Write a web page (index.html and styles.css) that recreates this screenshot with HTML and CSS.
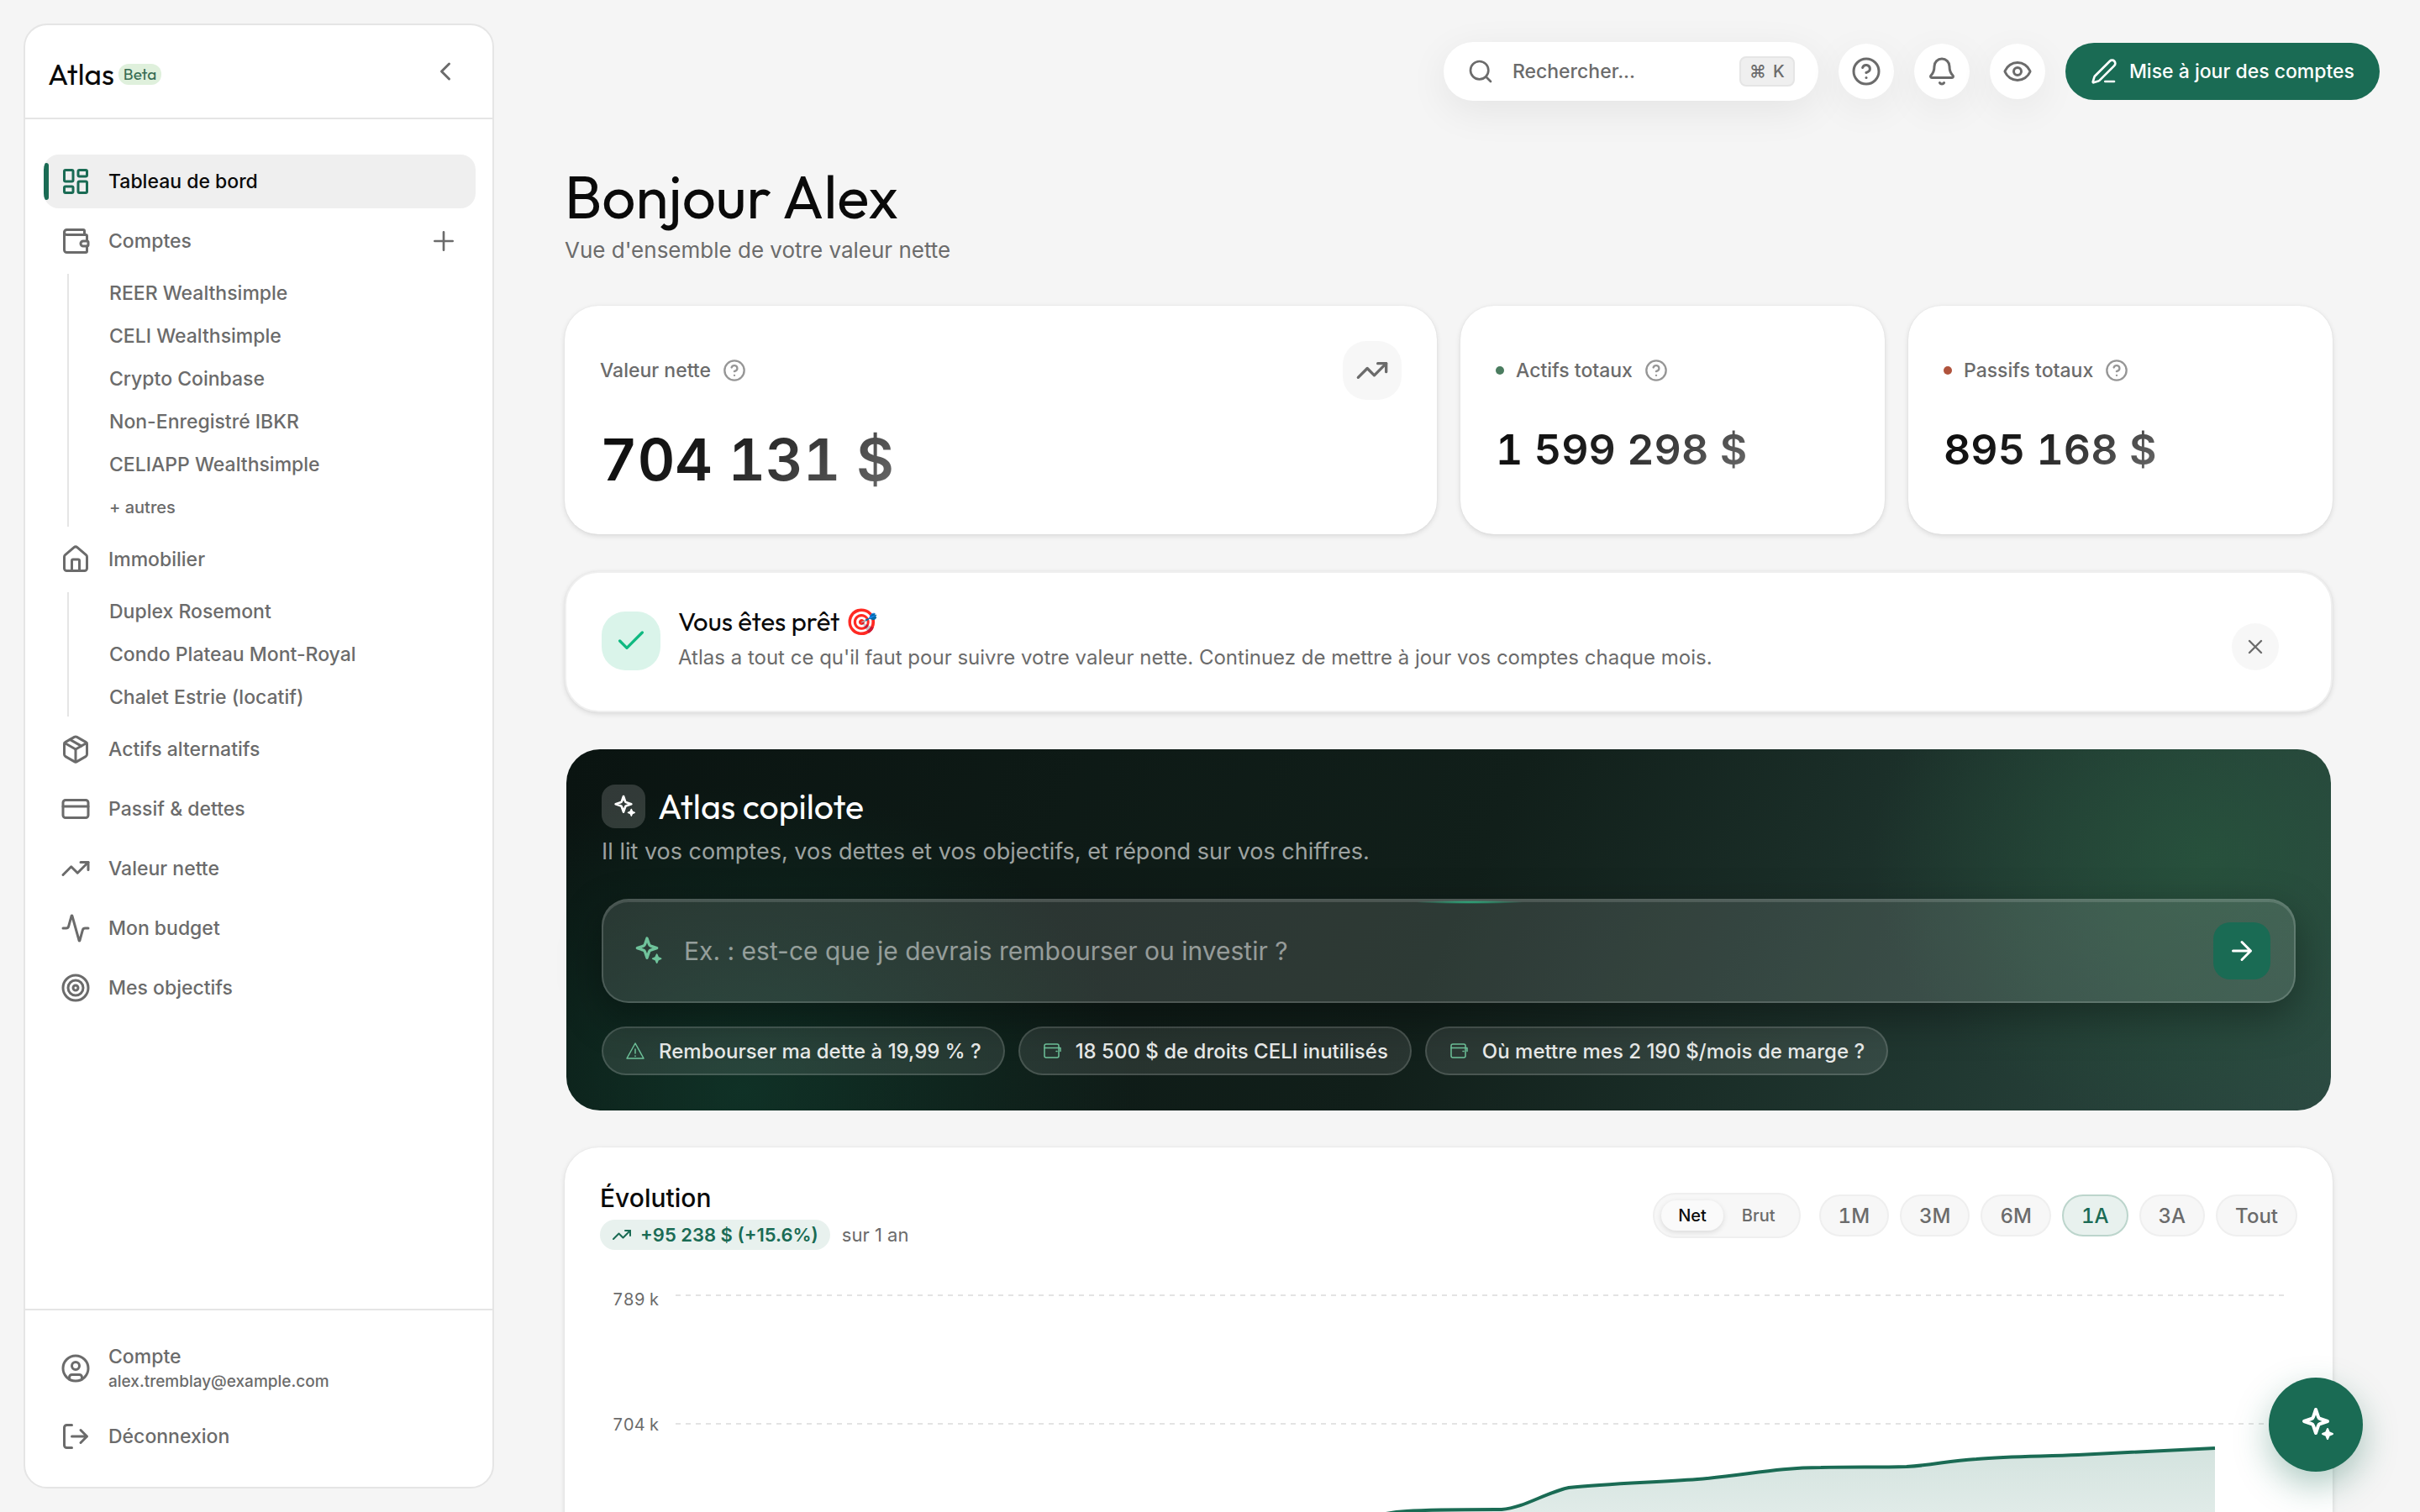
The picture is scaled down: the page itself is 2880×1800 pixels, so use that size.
FILE: index.html
```html
<!DOCTYPE html>
<html lang="fr">

<head>
  <meta charset="UTF-8">
  <title>Atlas</title>
  <link rel="stylesheet" href="styles.css">
</head>

<body>
  <!-- shared icons -->
  <svg class="sprite" aria-hidden="true">
    <symbol id="i-trend" viewBox="0 0 24 24">
      <path d="M22 7l-8.500 8.500-5-5L2 17" />
      <path d="M16 7h6v6" />
    </symbol>
    <symbol id="i-help" viewBox="0 0 24 24">
      <circle cx="12" cy="12" r="10" />
      <path d="M9.090 9a3 3 0 0 1 5.830 1c0 2-3 3-3 3" />
      <path d="M12 17h.01" />
    </symbol>
    <symbol id="i-spark" viewBox="0 0 24 24">
      <path d="M12 3l1.500 4.400a1.700 1.700 0 0 0 1.100 1.100L19 10l-4.400 1.500a1.700 1.700 0 0 0-1.100 1.100L12 17l-1.500-4.400a1.700 1.700 0 0 0-1.100-1.100L5 10l4.400-1.500a1.700 1.700 0 0 0 1.100-1.100z" />
      <path fill="currentColor" stroke-width="1" d="M19 14.500l.9 2.100 2.100.9-2.100.9-.9 2.100-.9-2.100-2.100-.9 2.100-.9z" />
    </symbol>
    <symbol id="i-purse" viewBox="0 0 24 24">
      <rect x="3" y="4" width="17" height="16" rx="2" />
      <path d="M3 8.500h17M20 8.500h2v4M17 12.500h1" />
    </symbol>
  </svg>

  <div class="app">
    <aside class="sidebar">
      <div class="brand">
        <div class="brand-id">
          <span class="brand-name">Atlas</span>
          <span class="beta">Beta</span>
        </div>
        <button class="icon-btn" aria-label="Réduire le menu">
          <svg class="icon i36" viewBox="0 0 24 24"><path d="M15 18l-6-6 6-6" /></svg>
        </button>
      </div>

      <nav class="nav">
        <a class="nav-item active" href="#">
          <svg class="icon i36" viewBox="0 0 24 24"><rect x="3" y="3" width="7" height="9" rx="1" /><rect x="14" y="3" width="7" height="5" rx="1" /><rect x="14" y="12" width="7" height="9" rx="1" /><rect x="3" y="16" width="7" height="5" rx="1" /></svg>
          Tableau de bord
        </a>
        <div class="nav-row">
          <a class="nav-item" href="#">
            <svg class="icon i36" viewBox="0 0 24 24"><path d="M19 7V4a1 1 0 0 0-1-1H5a2 2 0 0 0 0 4h15a1 1 0 0 1 1 1v4h-3a2 2 0 0 0 0 4h3a1 1 0 0 0 1-1v-2a1 1 0 0 0-1-1" /><path d="M3 5v14a2 2 0 0 0 2 2h15a1 1 0 0 0 1-1v-4" /></svg>
            Comptes
          </a>
          <button class="icon-btn" aria-label="Ajouter un compte">
            <svg class="icon i32" viewBox="0 0 24 24"><path d="M4 12h16M12 4v16" /></svg>
          </button>
        </div>
        <div class="subnav">
          <a href="#">REER Wealthsimple</a>
          <a href="#">CELI Wealthsimple</a>
          <a href="#">Crypto Coinbase</a>
          <a href="#">Non-Enregistré IBKR</a>
          <a href="#">CELIAPP Wealthsimple</a>
          <a class="more" href="#">+ autres</a>
        </div>
        <a class="nav-item" href="#">
          <svg class="icon i36" viewBox="0 0 24 24"><path d="M15 21v-8a1 1 0 0 0-1-1h-4a1 1 0 0 0-1 1v8" /><path d="M3 10a2 2 0 0 1 .709-1.528l7-5.999a2 2 0 0 1 2.582 0l7 5.999A2 2 0 0 1 21 10v9a2 2 0 0 1-2 2H5a2 2 0 0 1-2-2z" /></svg>
          Immobilier
        </a>
        <div class="subnav">
          <a href="#">Duplex Rosemont</a>
          <a href="#">Condo Plateau Mont-Royal</a>
          <a href="#">Chalet Estrie (locatif)</a>
        </div>
        <a class="nav-item" href="#">
          <svg class="icon i36" viewBox="0 0 24 24"><path d="M11 21.730a2 2 0 0 0 2 0l7-4A2 2 0 0 0 21 16V8a2 2 0 0 0-1-1.730l-7-4a2 2 0 0 0-2 0l-7 4A2 2 0 0 0 3 8v8a2 2 0 0 0 1 1.730z" /><path d="M12 22V12" /><path d="M3.290 7L12 12l8.710-5" /><path d="M7.500 4.270l9 5.150" /></svg>
          Actifs alternatifs
        </a>
        <a class="nav-item" href="#">
          <svg class="icon i36" viewBox="0 0 24 24"><rect x="2" y="5" width="20" height="14" rx="2" /><path d="M2 10h20" /></svg>
          Passif &amp; dettes
        </a>
        <a class="nav-item" href="#">
          <svg class="icon i36"><use href="#i-trend" /></svg>
          Valeur nette
        </a>
        <a class="nav-item" href="#">
          <svg class="icon i36" viewBox="0 0 24 24"><path d="M22 12h-2.480a2 2 0 0 0-1.930 1.460l-2.350 8.360a.25.25 0 0 1-.48 0L9.240 2.180a.25.25 0 0 0-.48 0l-2.350 8.360A2 2 0 0 1 4.490 12H2" /></svg>
          Mon budget
        </a>
        <a class="nav-item" href="#">
          <svg class="icon i36" viewBox="0 0 24 24"><circle cx="12" cy="12" r="10" /><circle cx="12" cy="12" r="6" /><circle cx="12" cy="12" r="2" /></svg>
          Mes objectifs
        </a>
      </nav>

      <div class="account">
        <a class="nav-item tall" href="#">
          <svg class="icon i36" viewBox="0 0 24 24"><circle cx="12" cy="12" r="10" /><circle cx="12" cy="10" r="3" /><path d="M7 20.662V19a2 2 0 0 1 2-2h6a2 2 0 0 1 2 2v1.662" /></svg>
          <span>Compte<small>alex.tremblay@example.com</small></span>
        </a>
        <a class="nav-item" href="#">
          <svg class="icon i36" viewBox="0 0 24 24"><path d="M9 3H5a2 2 0 0 0-2 2v14a2 2 0 0 0 2 2h4M16 17l5-5-5-5M21 12H9" /></svg>
          Déconnexion
        </a>
      </div>
    </aside>

    <main class="main">
      <header class="topbar">
        <label class="search">
          <svg class="icon i32" viewBox="0 0 24 24"><circle cx="11" cy="11" r="8" /><path d="M21 21l-4.300-4.300" /></svg>
          <input type="text" placeholder="Rechercher..." aria-label="Rechercher">
          <kbd><span>⌘</span><span>K</span></kbd>
        </label>
        <button class="round" aria-label="Aide"><svg class="icon i36"><use href="#i-help" /></svg></button>
        <button class="round" aria-label="Notifications">
          <svg class="icon i36" viewBox="0 0 24 24"><path d="M10.268 21a2 2 0 0 0 3.464 0" /><path d="M3.262 15.326A1 1 0 0 0 4 17h16a1 1 0 0 0 .740-1.673C19.410 13.956 18 12.499 18 8A6 6 0 0 0 6 8c0 4.499-1.411 5.956-2.738 7.326" /></svg>
        </button>
        <button class="round" aria-label="Masquer les montants">
          <svg class="icon i36" viewBox="0 0 24 24"><path d="M2.062 12.348a1 1 0 0 1 0-.696 10.750 10.750 0 0 1 19.876 0 1 1 0 0 1 0 .696 10.750 10.750 0 0 1-19.876 0" /><circle cx="12" cy="12" r="3" /></svg>
        </button>
        <button class="cta">
          <svg class="icon i32" viewBox="0 0 24 24"><path d="M13 21h8" /><path d="M21.174 6.812a1 1 0 0 0-3.986-3.987L3.842 16.174a2 2 0 0 0-.5.830l-1.321 4.352a.5.5 0 0 0 .623.622l4.353-1.320a2 2 0 0 0 .830-.497z" /></svg>
          Mise à jour des comptes
        </button>
      </header>

      <div class="content">
        <h1>Bonjour Alex</h1>
        <p class="lead">Vue d'ensemble de votre valeur nette</p>

        <section class="stats">
          <div class="card stat wide">
            <div class="stat-label">Valeur nette <svg class="icon i28 faded"><use href="#i-help" /></svg>
              <span class="stat-tile"><svg class="icon i40"><use href="#i-trend" /></svg></span>
            </div>
            <span class="amount big">704 131 $</span>
          </div>
          <div class="card stat">
            <div class="stat-label"><i class="dot green"></i>Actifs totaux <svg class="icon i28 faded"><use href="#i-help" /></svg></div>
            <span class="amount">1 599 298 $</span>
          </div>
          <div class="card stat">
            <div class="stat-label"><i class="dot red"></i>Passifs totaux <svg class="icon i28 faded"><use href="#i-help" /></svg></div>
            <span class="amount">895 168 $</span>
          </div>
        </section>

        <section class="card ready">
          <span class="ready-tile"><svg class="icon i40" viewBox="0 0 24 24"><path d="M20 6L9 17l-5-5" /></svg></span>
          <div class="ready-text">
            <h2>Vous êtes prêt 🎯</h2>
            <p>Atlas a tout ce qu'il faut pour suivre votre valeur nette. Continuez de mettre à jour vos comptes chaque mois.</p>
          </div>
          <button class="close" aria-label="Fermer"><svg class="icon i28" viewBox="0 0 24 24"><path d="M18 6L6 18M6 6l12 12" /></svg></button>
        </section>

        <section class="copilot">
          <div class="copilot-head">
            <span class="copilot-tile"><svg class="icon i32"><use href="#i-spark" /></svg></span>
            <h2>Atlas copilote</h2>
          </div>
          <p>Il lit vos comptes, vos dettes et vos objectifs, et répond sur vos chiffres.</p>
          <form class="ask">
            <svg class="icon i40"><use href="#i-spark" /></svg>
            <input type="text" placeholder="Ex. : est-ce que je devrais rembourser ou investir ?" aria-label="Question au copilote">
            <button type="button" aria-label="Envoyer"><svg class="icon i36" viewBox="0 0 24 24"><path d="M5 12h14M12 5l7 7-7 7" /></svg></button>
          </form>
          <div class="chips">
            <button><svg class="icon i24 thin" viewBox="0 0 24 24"><path d="M12 3l10 18H2zM12 10v5M12 18v.5" /></svg>Rembourser ma dette à 19,99 % ?</button>
            <button><svg class="icon i24 thin"><use href="#i-purse" /></svg>18 500 $ de droits CELI inutilisés</button>
            <button><svg class="icon i24 thin"><use href="#i-purse" /></svg>Où mettre mes 2 190 $/mois de marge ?</button>
          </div>
        </section>

        <section class="card evolution">
          <div class="evo-head">
            <div>
              <h3>Évolution</h3>
              <div class="evo-sub">
                <span class="badge"><svg class="icon i24"><use href="#i-trend" /></svg>+95 238 $ (+15.6%)</span>
                sur 1 an
              </div>
            </div>
            <div class="evo-controls">
              <div class="toggle">
                <button class="on">Net</button>
                <button>Brut</button>
              </div>
              <div class="ranges">
                <button>1M</button>
                <button>3M</button>
                <button>6M</button>
                <button class="on">1A</button>
                <button>3A</button>
                <button>Tout</button>
              </div>
            </div>
          </div>
          <div class="chart">
            <div class="axis"><span>789 k</span><span>704 k</span></div>
            <svg class="plot" viewBox="0 0 1916 340" preserveAspectRatio="none">
              <defs>
                <linearGradient id="area" x1="0" y1="0" x2="0" y2="1">
                  <stop offset="0" stop-color="#1a6b54" stop-opacity=".19" />
                  <stop offset="1" stop-color="#1a6b54" stop-opacity=".08" />
                </linearGradient>
              </defs>
              <path class="gridline" d="M0 7H1916M0 160H1916" />
              <path fill="url(#area)" d="M700 340C740 310 800 268 870 264C900 262 950 262 983 262C1010 260 1035 242 1063 236C1110 231 1160 230 1216 226C1270 222 1310 212 1363 212C1400 211 1430 212 1465 211C1500 209 1512 204 1548 202C1590 198 1630 199 1669 197L1832 189V340Z" />
              <path class="line" d="M700 340C740 310 800 268 870 264C900 262 950 262 983 262C1010 260 1035 242 1063 236C1110 231 1160 230 1216 226C1270 222 1310 212 1363 212C1400 211 1430 212 1465 211C1500 209 1512 204 1548 202C1590 198 1630 199 1669 197L1832 189" />
            </svg>
          </div>
        </section>
      </div>
    </main>
  </div>

  <button class="fab" aria-label="Ouvrir le copilote"><svg class="icon i48"><use href="#i-spark" /></svg></button>
</body>

</html>
```
FILE: styles.css
```css
* {
  box-sizing: border-box;
}

body {
  margin: 0;
  background: #f5f5f5;
  color: #0a0a0a;
  font-family: Inter, "Liberation Sans", sans-serif;
  font-size: 23px;
  font-weight: 500;
}

h1, h2, h3, p {
  margin: 0;
}

h1, h2, .brand {
  font-family: Outfit, Lato, sans-serif;
  font-weight: 400;
}

button, input {
  font: inherit;
  color: inherit;
  border: 0;
  padding: 0;
  background: none;
}

input {
  flex: 1;
  min-width: 0;
  outline: none;
}

a {
  color: inherit;
  text-decoration: none;
}

.sprite {
  position: absolute;
  width: 0;
  height: 0;
}

/* icons */
.icon {
  flex: none;
  display: block;
  fill: none;
  stroke: currentColor;
  stroke-width: 2;
  stroke-linecap: round;
  stroke-linejoin: round;
}
.thin { stroke-width: 1.5; }
.faded { opacity: .7; }
.i24 { width: 24px; height: 24px; }
.i28 { width: 28px; height: 28px; }
.i32 { width: 32px; height: 32px; }
.i36 { width: 36px; height: 36px; }
.i40 { width: 40px; height: 40px; }
.i48 { width: 48px; height: 48px; }

.app {
  display: flex;
  height: 100vh;
  overflow: hidden;
}

/* sidebar */
.sidebar {
  flex: none;
  display: flex;
  flex-direction: column;
  width: 560px;
  margin: 28px;
  background: #fff;
  border: 2px solid #e5e5e5;
  border-radius: 28px;
  color: #6b6b6b;
}

.brand {
  display: flex;
  align-items: center;
  justify-content: space-between;
  height: 112px;
  padding: 0 38px 0 27px;
  border-bottom: 2px solid #e5e5e5;
}

.brand-id {
  display: flex;
  align-items: center;
  gap: 5px;
  padding-top: 6px;
}

.brand-name {
  color: #0a0a0a;
  font-size: 35px;
}

.beta {
  padding: 0 6px;
  background: #dff0dc;
  border-radius: 12px;
  color: #356b52;
  font-size: 19px;
  line-height: 25px;
}

.nav {
  flex: 1;
  display: flex;
  flex-direction: column;
  gap: 7px;
  padding: 42px 20px 0 22px;
}

.nav-item {
  position: relative;
  display: flex;
  align-items: center;
  gap: 21px;
  height: 64px;
  padding: 0 20px;
  border-radius: 18px;
}

.nav-item.active {
  background: #efefef;
  color: #0a0a0a;
  overflow: hidden;
}

.nav-item.active .icon {
  color: #1a6b54;
}

.nav-item.active::before {
  content: "";
  position: absolute;
  left: 0;
  width: 6px;
  height: 44px;
  border-radius: 4px;
  background: #1a6b54;
}

.nav-row {
  display: flex;
  align-items: center;
  justify-content: space-between;
  padding-right: 22px;
}

.subnav {
  display: flex;
  flex-direction: column;
  gap: 5px;
  margin-left: 28px;
  padding-left: 48px;
  border-left: 2px solid #e5e5e5;
}

.subnav a {
  line-height: 46px;
}

.subnav .more {
  font-size: 20px;
}

.account {
  display: flex;
  flex-direction: column;
  gap: 8px;
  padding: 28px 20px 28px 22px;
  border-top: 2px solid #e5e5e5;
}

.nav-item.tall {
  height: 82px;
}

.account small {
  display: block;
  padding-top: 4px;
  font-size: 19px;
  line-height: 24px;
}

/* top bar */
.main {
  flex: 1;
  min-width: 0;
  padding-right: 48px;
}

.topbar {
  display: flex;
  justify-content: flex-end;
  align-items: center;
  gap: 24px;
  padding-top: 50px;
  color: #6b6b6b;
}

.search {
  display: flex;
  align-items: center;
  gap: 22px;
  width: 446px;
  height: 70px;
  padding: 0 28px;
  background: #fff;
  border-radius: 35px;
  box-shadow: 0 12px 48px rgba(0, 0, 0, .07);
}

.search input::placeholder {
  color: #6b6b6b;
  opacity: 1;
}

.search kbd {
  display: flex;
  justify-content: center;
  gap: 8px;
  width: 66px;
  background: #efefef;
  border: 2px solid #e5e5e5;
  border-radius: 8px;
  font: 500 20px/32px Inter, sans-serif;
}

.round {
  display: flex;
  align-items: center;
  justify-content: center;
  width: 66px;
  height: 66px;
  background: #fff;
  border-radius: 50%;
  box-shadow: 0 12px 48px rgba(0, 0, 0, .06);
}

.cta {
  display: flex;
  align-items: center;
  gap: 14px;
  height: 68px;
  padding: 0 30px;
  background: #1a6b54;
  border-radius: 34px;
  color: #fff;
}

/* page */
.content {
  padding: 74px 56px 0;
}

h1 {
  font-size: 71px;
  line-height: 80px;
}

.lead {
  margin: 6px 0 48px;
  color: #6b6b6b;
  font-size: 26px;
  font-weight: 400;
  line-height: 36px;
}

.card {
  background: #fff;
  border-radius: 40px;
  box-shadow: 0 2px 6px rgba(0, 0, 0, .12), 0 0 2px rgba(0, 0, 0, .06);
}

.stats {
  display: grid;
  grid-template-columns: repeat(4, 1fr);
  gap: 28px;
}

.stat {
  padding: 42px;
}

.stat.wide {
  grid-column: span 2;
}

.stat-label {
  display: flex;
  align-items: center;
  gap: 14px;
  height: 70px;
  margin-bottom: 24px;
  color: #6b6b6b;
}

.stat-tile {
  display: flex;
  align-items: center;
  justify-content: center;
  width: 70px;
  height: 70px;
  margin-left: auto;
  background: #f7f7f7;
  border-radius: 28px;
}

.dot {
  width: 10px;
  height: 10px;
  border-radius: 50%;
}
.dot.green { background: #4a7c5f; }
.dot.red { background: #b0533c; }

.amount {
  display: inline-block;
  background: linear-gradient(135deg, #0a0a0a 0%, #1c1c1c 40%, #6b6b6b 100%);
  -webkit-background-clip: text;
  background-clip: text;
  color: transparent;
  font-size: 50px;
  font-weight: 600;
  font-variant-numeric: tabular-nums;
  line-height: 70px;
}

.amount.big {
  font-size: 69px;
  line-height: 94px;
}

.ready {
  display: flex;
  align-items: center;
  gap: 21px;
  margin-top: 44px;
  padding: 38px 62px 40px 42px;
  border: 2px solid #efefef;
}

.ready-tile {
  display: flex;
  align-items: center;
  justify-content: center;
  width: 70px;
  height: 70px;
  background: #daf4ea;
  border-radius: 28px;
  color: #10b981;
}

.ready-text {
  flex: 1;
}

.ready h2 {
  font-size: 31px;
  line-height: 40px;
}

.ready p {
  color: #6b6b6b;
  font-size: 24px;
  font-weight: 400;
  line-height: 46px;
}

.close {
  display: flex;
  align-items: center;
  justify-content: center;
  width: 56px;
  height: 56px;
  margin-top: 14px;
  background: #f7f7f7;
  border-radius: 50%;
  color: #6b6b6b;
}

/* copilot */
.copilot {
  margin: 44px 2px;
  padding: 42px;
  border-radius: 40px;
  background:
    radial-gradient(ellipse 19% 75% at 93% 30%, rgba(40, 88, 62, .7), rgba(40, 88, 62, 0)),
    radial-gradient(ellipse 22% 85% at 10% 95%, rgba(18, 66, 50, .6), rgba(18, 66, 50, 0)),
    linear-gradient(115deg, #0a1411 0%, #111f1a 50%, #2c4a42 100%);
  color: #fff;
}

.copilot-head {
  display: flex;
  align-items: center;
  gap: 15px;
}

.copilot-tile {
  display: flex;
  align-items: center;
  justify-content: center;
  width: 52px;
  height: 52px;
  background: rgba(255, 255, 255, .16);
  border-radius: 16px;
}

.copilot h2 {
  font-size: 41px;
  line-height: 52px;
}

.copilot p {
  margin-top: 8px;
  color: rgba(255, 255, 255, .6);
  font-size: 27px;
  font-weight: 400;
  line-height: 40px;
}

.ask {
  position: relative;
  display: flex;
  align-items: center;
  gap: 24px;
  height: 124px;
  margin: 36px 0 28px;
  padding: 0 28px 0 32px;
  background: rgba(255, 255, 255, .12);
  border: 2px solid rgba(255, 255, 255, .16);
  border-radius: 32px;
  box-shadow: inset 0 2px 0 rgba(255, 255, 255, .14), 0 16px 48px rgba(0, 0, 0, .35);
  color: #6fc39b;
}

/* light running along the top edge */
.ask::before {
  content: "";
  position: absolute;
  top: 0;
  left: 48%;
  width: 130px;
  height: 4px;
  background: radial-gradient(closest-side, #2bb884, rgba(43, 184, 132, 0));
}

.ask input {
  color: #fff;
  font-size: 30px;
  font-weight: 400;
}

.ask input::placeholder {
  color: rgba(255, 255, 255, .5);
}

.ask button {
  display: flex;
  align-items: center;
  justify-content: center;
  width: 68px;
  height: 68px;
  background: #1a6b54;
  border-radius: 20px;
  color: #fff;
}

.chips {
  display: flex;
  gap: 16px;
}

.chips button {
  display: flex;
  align-items: center;
  gap: 16px;
  height: 58px;
  padding: 0 26px;
  background: rgba(255, 255, 255, .1);
  border: 2px solid rgba(255, 255, 255, .15);
  border-radius: 29px;
  color: #e8eae9;
  font-size: 24px;
}

.chips .icon {
  color: #6fc39b;
}

/* evolution */
.evolution {
  padding: 40px 42px;
}

.evo-head {
  display: flex;
  align-items: center;
  justify-content: space-between;
}

h3 {
  font-size: 30px;
  font-weight: 500;
  line-height: 40px;
}

.evo-sub {
  display: flex;
  align-items: center;
  gap: 14px;
  margin-top: 6px;
  color: #6b6b6b;
  font-size: 22px;
  font-weight: 400;
}

.badge {
  display: flex;
  align-items: center;
  gap: 10px;
  height: 36px;
  padding: 0 14px;
  background: #e8f1ee;
  border-radius: 18px;
  color: #1a6b54;
  font-weight: 600;
}

.evo-controls, .ranges, .toggle {
  display: flex;
  align-items: center;
}

.evo-controls {
  gap: 22px;
}

.toggle {
  gap: 2px;
  height: 54px;
  padding: 0 8px;
  background: #f7f7f7;
  border: 2px solid #efefef;
  border-radius: 27px;
  color: #6b6b6b;
  font-size: 20px;
}

.toggle button {
  height: 36px;
  padding: 0 20px;
  border-radius: 18px;
}

.toggle .on {
  background: #fafafa;
  box-shadow: 0 2px 6px rgba(0, 0, 0, .12);
  color: #0a0a0a;
}

.ranges {
  gap: 13px;
}

.ranges button {
  height: 50px;
  padding: 0 21px;
  background: #f7f7f7;
  border: 2px solid #efefef;
  border-radius: 25px;
  color: #6b6b6b;
  font-size: 24px;
  font-variant-numeric: tabular-nums;
}

.ranges .on {
  background: #e8f1ee;
  border-color: #bcd5cc;
  color: #1a6b54;
}

.chart {
  display: flex;
  gap: 20px;
  margin-top: 47px;
  padding-right: 14px;
}

.axis {
  display: flex;
  flex-direction: column;
  gap: 125px;
  width: 70px;
  color: #6b6b6b;
  font-size: 20px;
  font-weight: 400;
  font-variant-numeric: tabular-nums;
  line-height: 24px;
  text-align: right;
}

.plot {
  flex: 1;
  min-width: 0;
  height: 340px;
}

.gridline {
  stroke: #e3e3e3;
  stroke-width: 2;
  stroke-dasharray: 6 6;
}

.line {
  fill: none;
  stroke: #1a6b54;
  stroke-width: 4;
}

.fab {
  position: fixed;
  right: 68px;
  bottom: 48px;
  display: flex;
  align-items: center;
  justify-content: center;
  width: 112px;
  height: 112px;
  background: #1a6b54;
  border-radius: 50%;
  box-shadow: 0 16px 40px rgba(26, 107, 84, .35);
  color: #fff;
}
```
